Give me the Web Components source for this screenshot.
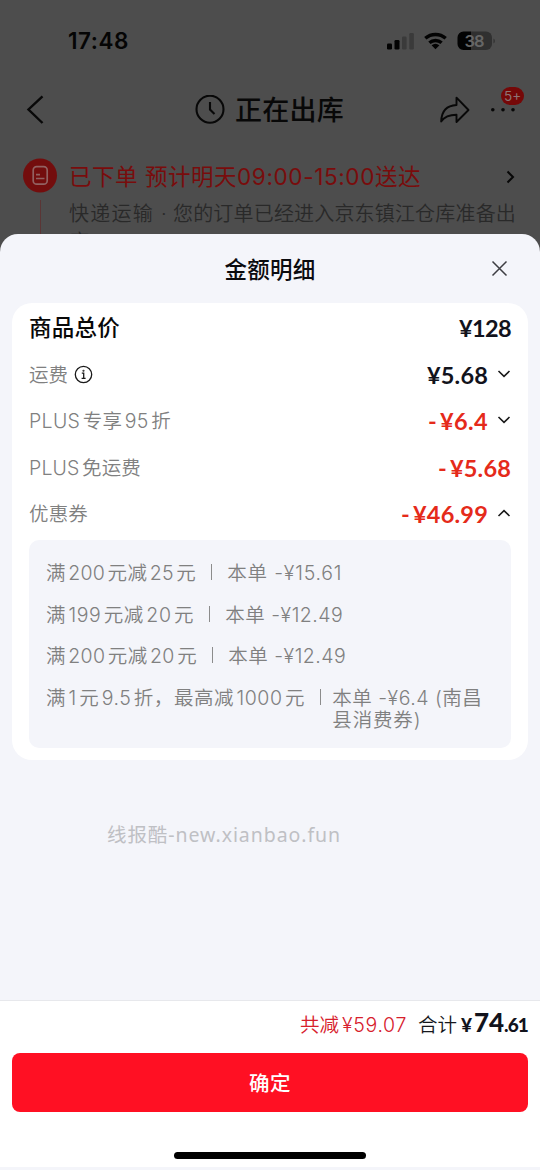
<!DOCTYPE html>
<html lang="zh-CN">
<head>
<meta charset="utf-8">
<title>金额明细</title>
<style>
html,body{margin:0;padding:0;width:540px;height:1170px;overflow:hidden;background:#4d4d4d}
body{font-family:Inter,"Noto Sans CJK SC",sans-serif}
</style>
</head>
<body>
<order-screen></order-screen>
<script>
const define = (name, html) => {
  const t = document.createElement('template');
  t.innerHTML = html;
  customElements.define(name, class extends HTMLElement {
    constructor() {
      super();
      this.attachShadow({ mode: 'open' }).append(t.content.cloneNode(true));
    }
  });
};

// One line of text whose tracking is adjusted to a given advance width.
customElements.define('fit-text', class extends HTMLElement {
  constructor() {
    super();
    this.attachShadow({ mode: 'open' }).innerHTML =
      '<style>:host{display:inline-block;white-space:pre;text-autospace:normal;flex:none}span{display:inline-block}</style><span><slot></slot></span>';
  }
  connectedCallback() {
    const w = parseFloat(this.getAttribute('w'));
    const s = this.shadowRoot.querySelector('span');
    s.style.letterSpacing = '0px';
    const n = this.textContent.length;
    s.style.letterSpacing = ((w - s.getBoundingClientRect().width) / n).toFixed(3) + 'px';
    this.style.width = w + 'px';
  }
});

define('status-bar', `<style>
:host{display:flex;height:81px;align-items:center;padding:0 45px 0 68px;box-sizing:border-box}
.t{font-weight:600;font-size:22.5px;line-height:24px;margin-right:auto;color:#050505}
svg{display:block}
</style>
<fit-text class="t" w="61">17:48</fit-text>
<svg width="110" height="24" viewBox="0 0 110 24">
<g fill="#030303"><rect x="2" y="14.5" width="5" height="6" rx="1.3"/><rect x="9.5" y="11" width="5" height="9.5" rx="1.3"/></g>
<g fill="#3a3a3a"><rect x="17" y="7.5" width="4.6" height="13" rx="1.3"/><rect x="24.3" y="4" width="4.6" height="16.5" rx="1.3"/></g>
<g fill="none" stroke="#030303" stroke-width="3.4"><path d="M40.3 9.3a15.4 15.4 0 0 1 20.4 0"/><path d="M44.4 13.8a9.2 9.2 0 0 1 12.2 0"/></g><path d="M46.6 16.3a6 6 0 0 1 7.8 0L50.5 20.2z" fill="#030303"/>
<path d="M79 2.500H78.500a6 6 0 0 0-6 6v6.500a6 6 0 0 0 6 6H86V2.500z" fill="#030303"/><path d="M86 2.500h15a6 6 0 0 1 6 6v6.500a6 6 0 0 1-6 6H86z" fill="#303030"/>
<path d="M108.500 9.500v5a3 3 0 0 0 0-5z" fill="#303030"/>
<text x="89.500" y="17.700" text-anchor="middle" font-family="Inter" font-weight="600" font-size="16.500" textLength="20" fill="#666">38</text>
</svg>`);

define('nav-bar', `<style>
:host{display:grid;grid-template-columns:168px 203px 1fr;height:57px;align-items:center;color:#080808}
svg{display:block}
.c{display:flex;align-items:center;justify-content:center;gap:10px}
.n{font-weight:500;font-size:27px;line-height:30px;margin-top:2px}
.r{display:flex;position:relative;padding-left:67px;gap:18px;align-items:center}
.b{position:absolute;left:130px;top:-7px;width:23px;height:18px;border-radius:9px;background:#750808;color:#8e7474;font-size:13.5px;line-height:18px;text-align:center}
</style>
<svg width="60" height="40" viewBox="0 0 60 40" fill="none" stroke="#080808" stroke-width="2.400"><path d="M42.500 6.300 28.500 19.500 42.500 33"/></svg>
<div class="c"><svg width="30" height="30" viewBox="0 0 30 30" fill="none" stroke="#080808" stroke-width="2.100"><circle cx="15" cy="14.200" r="13.500"/><path d="M15 7v7.500l4.500 4.500"/></svg><fit-text class="n" w="109">正在出库</fit-text></div>
<div class="r"><svg width="34" height="32" viewBox="0 0 34 32" fill="none" stroke="#080808" stroke-width="1.900" stroke-linejoin="round"><path d="M18.500 3.700 30.500 16 18.500 28V20.800C11 20.800 6.500 22.700 3.200 27.500 3.500 17.500 8.500 11.500 18.500 11z"/></svg>
<svg width="27" height="10" viewBox="0 0 27 10" fill="#080808"><circle cx="2.800" cy="4.800" r="1.800"/><circle cx="13" cy="4.800" r="1.800"/><circle cx="23" cy="4.800" r="1.800"/></svg><span class="b">5+</span></div>`);

define('order-progress', `<style>
:host{display:grid;grid-template-columns:69px 1fr;margin-top:20px}
.l{display:flex;flex-direction:column;padding-left:23px;gap:6px}
svg{display:block}
i{width:1px;height:60px;margin-left:17px;background:#5b3535}
.h{display:flex;align-items:center;justify-content:space-between;padding-right:24px;height:38px}
.d{font-size:22.5px;line-height:30px;color:#790c0c;display:flex}
p{margin:4px 0 0;font-size:20px;line-height:28px;color:#292929;font-weight:350}
</style>
<div class="l"><svg width="35" height="36" viewBox="0 0 35 36"><circle cx="17" cy="17.500" r="17" fill="#730d0d"/><g fill="none" stroke="#926161" stroke-width="1.700"><rect x="10.200" y="8.700" width="14" height="17.500" rx="3.500"/><path d="M13 16.700h4M13 20.500h8.500"/></g></svg><i></i></div>
<div><div class="h"><span class="d"><fit-text w="168">已下单 预计明天</fit-text><fit-text w="138">09:00-15:00</fit-text><fit-text w="46">送达</fit-text></span>
<svg width="12" height="16" viewBox="0 0 12 16" fill="none" stroke="#070707" stroke-width="2"><path d="M3.500 2.500 9 8 3.500 13.500"/></svg></div>
<p><fit-text w="92">快递运输 </fit-text><fit-text w="12">·</fit-text><fit-text w="343">您的订单已经进入京东镇江仓库准备出</fit-text><br>库</p></div>`);

define('chevron-icon', `<style>:host{display:block;width:14px;height:10px;margin:-2px 0 0 9px}:host([up]){transform:rotate(180deg)}svg{display:block}</style>
<svg width="14" height="10" viewBox="0 0 14 10" fill="none" stroke="#1a1a1a" stroke-width="1.600"><path d="M1.500 2 7 7.300 12.500 2"/></svg>`);

define('amount-row', `<style>
:host{display:flex;align-items:center;justify-content:space-between;height:46.5px;font-size:19.5px;line-height:24px;color:#808080;font-weight:350}
:host([total]){height:48.5px;font-size:22.5px;font-weight:500;color:#080808}
.k{display:flex;align-items:center;gap:6px}
.v{display:flex;align-items:center;font-family:Lato,sans-serif;font-weight:700;font-size:23.5px;color:#12131c}
:host([minus]) .v{color:#e52a1a}
:host([total]) .v,:host([total]) .k{position:relative;top:1px}
</style>
<span class="k"><slot></slot></span><span class="v"><slot name="value"></slot></span>`);

define('coupon-row', `<style>
:host{display:flex;min-height:41.5px;font-size:19.5px;line-height:22.5px;color:#808080;font-weight:350}
i{width:1.3px;height:16px;background:#8c8c8c;margin:2px var(--after,15px) 0 var(--before,15px);flex:none}
.x{display:flex;flex-direction:column}
</style>
<slot></slot><i></i><span class="x"><slot name="used"></slot></span>`);

define('amount-card', `<style>
:host{display:block;margin:0 12px;height:457px;border-radius:20px;background:#fff;padding:0 17px;box-sizing:border-box}
.info{display:block}
.box{margin-top:2.5px;height:208px;box-sizing:border-box;padding:22px 17px 0;border-radius:10px;background:#f4f5fa}
</style>
<amount-row total><fit-text w="91">商品总价</fit-text><fit-text slot="value" w="52">¥128</fit-text></amount-row>
<amount-row><fit-text w="39">运费</fit-text><svg class="info" width="19" height="19" viewBox="0 0 19 19" fill="none" stroke="#1a1a1a" stroke-width="1.300"><circle cx="9.500" cy="9.500" r="8.200"/><path d="M7.800 8.200h1.900v5M7.600 13.300h4"/><circle cx="9.500" cy="5.700" r=".4"/></svg><fit-text slot="value" w="61">¥5.68</fit-text><chevron-icon slot="value"></chevron-icon></amount-row>
<amount-row minus><fit-text w="142">PLUS专享95折</fit-text><fit-text slot="value" w="12">-</fit-text><fit-text slot="value" w="48">¥6.4</fit-text><chevron-icon slot="value"></chevron-icon></amount-row>
<amount-row minus><fit-text w="112">PLUS免运费</fit-text><fit-text slot="value" w="12">-</fit-text><fit-text slot="value" w="61">¥5.68</fit-text></amount-row>
<amount-row minus><fit-text w="59">优惠券</fit-text><fit-text slot="value" w="12">-</fit-text><fit-text slot="value" w="75">¥46.99</fit-text><chevron-icon up slot="value"></chevron-icon></amount-row>
<div class="box">
<coupon-row><fit-text w="150">满200元减25元</fit-text><fit-text slot="used" w="115">本单 -¥15.61</fit-text></coupon-row>
<coupon-row><fit-text w="148">满199元减20元</fit-text><fit-text slot="used" w="118">本单 -¥12.49</fit-text></coupon-row>
<coupon-row><fit-text w="151">满200元减20元</fit-text><fit-text slot="used" w="118">本单 -¥12.49</fit-text></coupon-row>
<coupon-row style="--before:15px;--after:11px"><fit-text w="259">满1元9.5折，最高减1000元</fit-text><fit-text slot="used" w="150">本单 -¥6.4 (南昌</fit-text><fit-text slot="used" w="89">县消费券)</fit-text></coupon-row>
</div>`);

define('sheet-header', `<style>
:host{display:grid;grid-template-columns:1fr auto 1fr;align-items:center;height:69px;font-size:22.5px;line-height:30px;font-weight:500;color:#0b0b0f}
svg{justify-self:end;margin-right:32px;display:block}
slot{display:block;padding-top:2px}
</style><span></span><slot></slot>
<svg width="17" height="17" viewBox="0 0 17 17" stroke="#3d3e42" stroke-width="1.500"><path d="M1.500 1.500l14 14M15.500 1.500l-14 14"/></svg>`);

define('pay-footer', `<style>
:host{display:flex;flex-direction:column;box-sizing:border-box;height:167px;margin-top:auto;margin-bottom:3px;background:#fff;border-top:1px solid #e7e8ec}
.s{display:flex;justify-content:flex-end;align-items:center;height:47px;padding-right:12px;font-size:19.5px;line-height:28px;font-weight:350}
.r{color:#d7202c}
.m{margin:0 11px 0 3px}
.k{color:#16171c;margin-right:4px}
.p{display:flex;align-items:baseline;font-family:Lato,sans-serif;font-weight:900;color:#12131c;font-size:19px;position:relative;top:-1px}
.p .g{font-size:26px}
button{all:unset;display:flex;justify-content:center;align-items:center;margin:5px 12px 0;height:59px;border-radius:8px;background:#ff1023;color:#fff;font-size:20.500px;line-height:28px;font-weight:500}
button fit-text{margin-top:2px}
.home{width:192px;height:7px;border-radius:4px;background:#000;margin:40px auto 0}
</style>
<div class="s"><fit-text class="r" w="39">共减</fit-text><fit-text class="r m" w="65">¥59.07</fit-text><fit-text class="k" w="39">合计</fit-text><span class="p"><fit-text w="13">¥</fit-text><fit-text class="g" w="30">74</fit-text><fit-text w="24">.61</fit-text></span></div>
<button><fit-text w="42">确定</fit-text></button>
<div class="home"></div>`);

define('bottom-sheet', `<style>
:host{position:absolute;left:0;right:0;top:234px;bottom:0;display:flex;flex-direction:column;background:#f4f5fa;border-radius:18px 18px 0 0;overflow:hidden}
.w{font-family:"Noto Sans","Noto Sans CJK SC",sans-serif;font-size:19.500px;line-height:28px;color:#bfc0c4;font-weight:400;margin:61px 0 0 107px}
</style>
<sheet-header><fit-text w="91">金额明细</fit-text></sheet-header>
<amount-card></amount-card>
<fit-text class="w" w="234">线报酷-new.xianbao.fun</fit-text>
<pay-footer></pay-footer>`);

define('order-screen', `<style>
:host{display:block;position:relative;width:540px;height:1170px;overflow:hidden;background:#4d4d4d}
</style>
<status-bar></status-bar><nav-bar></nav-bar><order-progress></order-progress>
<bottom-sheet></bottom-sheet>`);
</script>
</body>
</html>
